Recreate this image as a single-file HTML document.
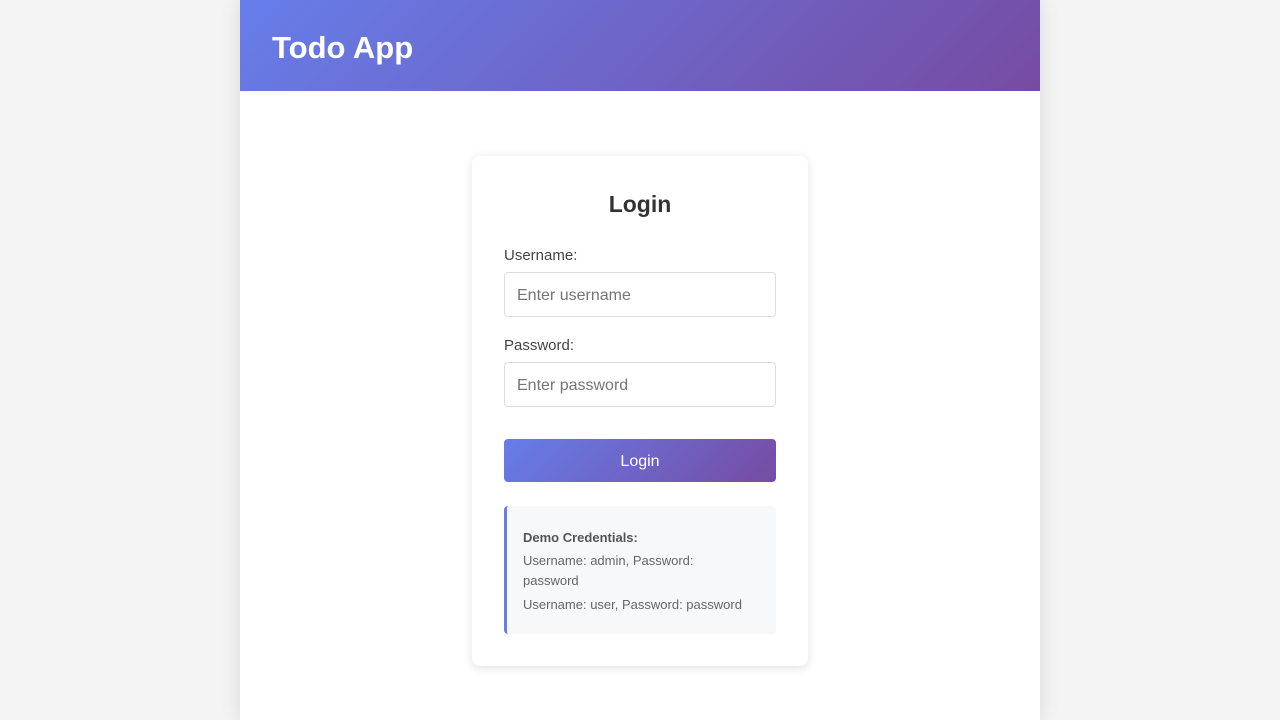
<!DOCTYPE html>
<html><head><style>
*{box-sizing:border-box;margin:0;padding:0}
body{background:#f4f4f4;font-family:"Liberation Sans",sans-serif;width:1280px;height:720px;overflow:hidden}
.wrap{position:absolute;left:240px;top:0;width:800px;height:720px;background:#fff;box-shadow:0 0 20px rgba(0,0,0,.12)}
.hdr{height:91px;background:linear-gradient(135deg,#667eea,#764ba2);color:#fff;font-size:31px;font-weight:bold;padding-left:32px;line-height:96px}
.card{position:absolute;left:232px;top:156px;width:336px;height:510px;background:#fff;border-radius:8px;box-shadow:0 2px 10px rgba(0,0,0,.12);padding:0 32px}
h2{text-align:center;font-size:23px;color:#333;font-weight:bold;margin-top:35px;height:30px}
label{display:block;font-size:15px;color:#444;position:absolute;left:32px}
.in{position:absolute;left:32px;width:272px;height:45px;border:1px solid #ddd;border-radius:4px;font-size:16px;color:#757575;padding-left:12px;line-height:45px}
.btn{position:absolute;left:32px;top:283px;width:272px;height:43px;border-radius:4px;background:linear-gradient(135deg,#667eea,#764ba2);color:#fff;text-align:center;line-height:45px;font-size:16px}
.demo{position:absolute;left:32px;top:350px;width:272px;height:128px;background:#f7f8fa;border-left:3px solid #667eea;border-radius:4px;padding:24px 0 0 16px;font-size:13px;color:#666;white-space:nowrap}
.demo b{display:block;margin-bottom:6px;color:#555}
.demo p{line-height:20px;margin-bottom:4px}
</style></head><body>
<div class="wrap">
<div class="hdr">Todo App</div>
<div class="card">
<h2>Login</h2>
<label style="top:91px">Username:</label>
<div class="in" style="top:116px">Enter username</div>
<label style="top:181px">Password:</label>
<div class="in" style="top:206px">Enter password</div>
<div class="btn">Login</div>
<div class="demo"><b>Demo Credentials:</b><p>Username: admin, Password:<br>password</p><p>Username: user, Password: password</p></div>
</div>
</div>
</body></html>
